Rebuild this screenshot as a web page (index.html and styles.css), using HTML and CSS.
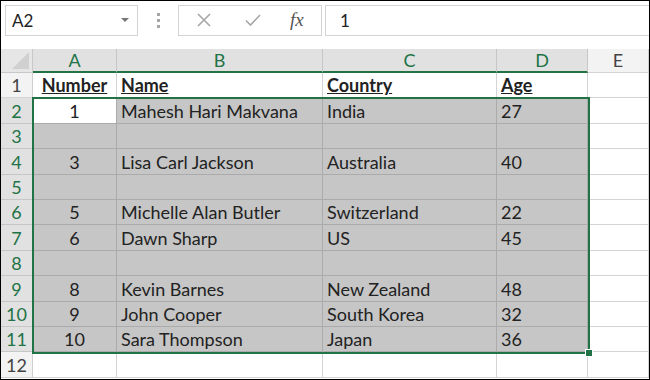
FILE: index.html
```html
<!DOCTYPE html>
<html lang="en">
<head>
    <meta charset="UTF-8">
    <title>Sheet</title>
    <link rel="stylesheet" href="styles.css">
</head>
<body>
    <div class="frame">
        <div class="toolbar">
            <div class="namebox"><span>A2</span><span class="caret"></span></div>
            <div class="grip"><i></i><i></i><i></i></div>
            <div class="fxbtns">
                <svg width="16" height="16" viewBox="0 0 16 16"><path d="M2 2L14 14M14 2L2 14" stroke="#a6a6a6" stroke-width="1.6" fill="none"/></svg>
                <svg width="18" height="16" viewBox="0 0 18 16"><path d="M2 8.5L6.5 13L16 3" stroke="#a6a6a6" stroke-width="1.6" fill="none"/></svg>
                <span class="fx">fx</span>
            </div>
            <div class="formula">1</div>
        </div>

        <div class="sheet">
            <div class="corner"><span class="tri"></span></div>
            <div class="ch sel">A</div>
            <div class="ch sel">B</div>
            <div class="ch sel">C</div>
            <div class="ch sel">D</div>
            <div class="ch">E</div>

            <div class="rh">1</div>
            <div class="c num hd"><u>Number</u></div>
            <div class="c hd"><u>Name</u></div>
            <div class="c hd"><u>Country</u></div>
            <div class="c hd"><u>Age</u></div>
            <div class="c"></div>

            <div class="rh sel">2</div>
            <div class="c s active num">1</div>
            <div class="c s">Mahesh Hari Makvana</div>
            <div class="c s">India</div>
            <div class="c s">27</div>
            <div class="c"></div>

            <div class="rh sel">3</div>
            <div class="c s"></div>
            <div class="c s"></div>
            <div class="c s"></div>
            <div class="c s"></div>
            <div class="c"></div>

            <div class="rh sel">4</div>
            <div class="c s num">3</div>
            <div class="c s">Lisa Carl Jackson</div>
            <div class="c s">Australia</div>
            <div class="c s">40</div>
            <div class="c"></div>

            <div class="rh sel">5</div>
            <div class="c s"></div>
            <div class="c s"></div>
            <div class="c s"></div>
            <div class="c s"></div>
            <div class="c"></div>

            <div class="rh sel">6</div>
            <div class="c s num">5</div>
            <div class="c s">Michelle Alan Butler</div>
            <div class="c s">Switzerland</div>
            <div class="c s">22</div>
            <div class="c"></div>

            <div class="rh sel">7</div>
            <div class="c s num">6</div>
            <div class="c s">Dawn Sharp</div>
            <div class="c s">US</div>
            <div class="c s">45</div>
            <div class="c"></div>

            <div class="rh sel">8</div>
            <div class="c s"></div>
            <div class="c s"></div>
            <div class="c s"></div>
            <div class="c s"></div>
            <div class="c"></div>

            <div class="rh sel">9</div>
            <div class="c s num">8</div>
            <div class="c s">Kevin Barnes</div>
            <div class="c s">New Zealand</div>
            <div class="c s">48</div>
            <div class="c"></div>

            <div class="rh sel">10</div>
            <div class="c s num">9</div>
            <div class="c s">John Cooper</div>
            <div class="c s">South Korea</div>
            <div class="c s">32</div>
            <div class="c"></div>

            <div class="rh sel">11</div>
            <div class="c s num">10</div>
            <div class="c s">Sara Thompson</div>
            <div class="c s">Japan</div>
            <div class="c s">36</div>
            <div class="c"></div>

            <div class="rh">12</div>
            <div class="c"></div>
            <div class="c"></div>
            <div class="c"></div>
            <div class="c"></div>
            <div class="c"></div>

            <div class="selection"><span class="handle"></span></div>
        </div>
    </div>
</body>
</html>
```

FILE: styles.css
```css
body {
    margin: 0;
    font-family: Lato, "Open Sans", sans-serif;
    color: #222;
}

.frame {
    width: 650px;
    height: 380px;
    box-sizing: border-box;
    border: 1px solid #000;
    background: #fff;
    overflow: hidden;
}

/* formula bar */
.toolbar {
    display: flex;
    align-items: center;
    height: 48px;
    padding-left: 4px;
    box-sizing: border-box;
    padding-bottom: 14px;
    padding-top: 4px;
}

.namebox {
    width: 133px;
    height: 31px;
    box-sizing: border-box;
    border: 1px solid #d4d4d4;
    display: flex;
    align-items: center;
    justify-content: space-between;
    padding: 0 8px 0 6px;
    font-size: 17px;
    color: #222;
}

.caret {
    width: 0;
    height: 0;
    border-left: 4px solid transparent;
    border-right: 4px solid transparent;
    border-top: 4px solid #777;
}

.grip {
    width: 40px;
    display: flex;
    flex-direction: column;
    align-items: center;
    gap: 3px;
}

.grip i {
    width: 3px;
    height: 3px;
    background: #a6a6a6;
}

.fxbtns {
    width: 144px;
    height: 31px;
    box-sizing: border-box;
    border: 1px solid #d4d4d4;
    display: flex;
    align-items: center;
    padding-left: 17px;
    gap: 32px;
}

.fx {
    font-family: "Liberation Serif", serif;
    font-style: italic;
    font-size: 19px;
    color: #555;
    margin-left: -4px;
}

.formula {
    flex: 1;
    height: 31px;
    margin-left: 3px;
    box-sizing: border-box;
    border: 1px solid #d4d4d4;
    border-right: none;
    display: flex;
    align-items: center;
    padding-left: 14px;
    font-size: 17px;
}

/* grid */
.sheet {
    position: relative;
    display: grid;
    grid-template-columns: 32px 84px 206px 174px 91px 1fr;
    grid-template-rows: 24px repeat(12, 25.4px);
}

.corner {
    background: #e6e6e6;
    border-right: 1px solid #c8c8c8;
    border-bottom: 1px solid #c8c8c8;
    position: relative;
}

.tri {
    position: absolute;
    right: 3px;
    bottom: 3px;
    width: 0;
    height: 0;
    border-left: 17px solid transparent;
    border-bottom: 17px solid #d0d0d0;
}

.ch {
    background: #f3f3f3;
    border-right: 1px solid #cfcfcf;
    border-bottom: 1px solid #d4d4d4;
    display: flex;
    align-items: flex-end;
    justify-content: center;
    padding-bottom: 1px;
    box-sizing: border-box;
    font-size: 18px;
    color: #444;
}

.ch.sel {
    background: #e1e1e1;
    color: #217346;
    border-bottom: 2px solid #217346;
    border-right-color: #c6c6c6;
    padding-bottom: 0;
}

.rh {
    background: #f3f3f3;
    border-right: 1px solid #cfcfcf;
    border-bottom: 1px solid #d4d4d4;
    display: flex;
    align-items: flex-end;
    justify-content: center;
    padding-bottom: 1px;
    box-sizing: border-box;
    font-size: 18px;
    color: #444;
}

.rh.sel {
    background: #e1e1e1;
    color: #217346;
    border-bottom-color: #c6c6c6;
}

.c {
    border-right: 1px solid #d4d4d4;
    border-bottom: 1px solid #d4d4d4;
    box-sizing: border-box;
    display: flex;
    align-items: flex-end;
    padding: 0 0 1px 4px;
    font-size: 18px;
    white-space: nowrap;
    overflow: hidden;
}

.c.s {
    background: #c6c6c6;
    border-color: #ababab;
}

.c.active {
    background: #fff;
}

.num {
    justify-content: center;
    padding-left: 0;
}

.hd {
    font-weight: bold;
}

.selection {
    position: absolute;
    left: 31px;
    top: 48px;
    width: 558px;
    height: 257px;
    box-sizing: border-box;
    border: 2px solid #217346;
    pointer-events: none;
}

.handle {
    position: absolute;
    right: -5px;
    bottom: -5px;
    width: 6px;
    height: 6px;
    background: #217346;
    border: 1px solid #fff;
}
```
